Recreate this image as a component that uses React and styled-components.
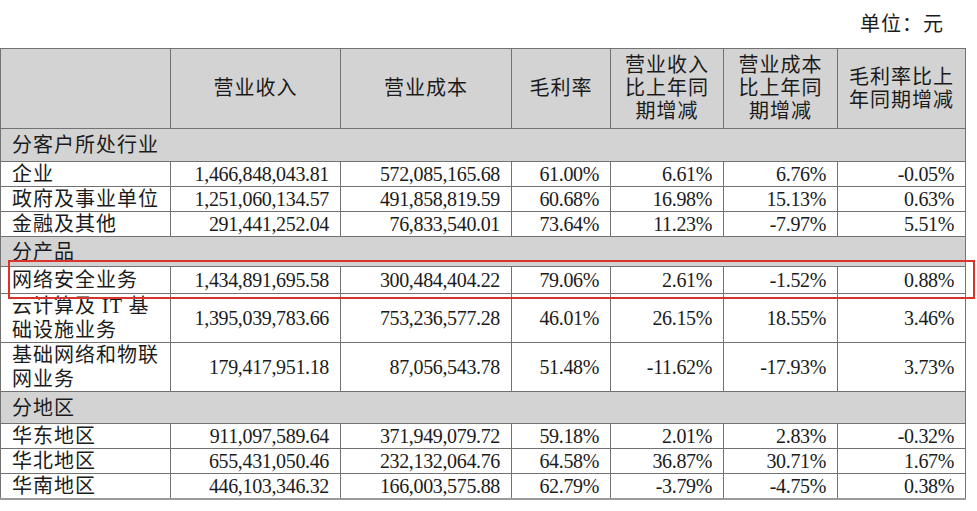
import React from "react";
import styled, { createGlobalStyle } from "styled-components";

const GlobalStyle = createGlobalStyle`
  html, body {
    margin: 0;
    padding: 0;
    background: #ffffff;
  }
  body {
    font-family: "Liberation Serif", "Noto Sans CJK SC", serif;
    color: #1b1b1b;
  }
`;

const Page = styled.div`
  width: 977px;
  height: 511px;
  overflow: hidden;
`;

const UnitLine = styled.div`
  height: 48px;
  box-sizing: border-box;
  padding: 12px 33px 0 0;
  text-align: right;
  font-size: 20px;
  line-height: 24px;
  letter-spacing: 1px;
`;

const TableWrap = styled.div`
  position: relative;
  width: 965px;
`;

const Table = styled.table`
  width: 965px;
  table-layout: fixed;
  border-collapse: collapse;
  font-size: 19px;
`;

const HeadCell = styled.th`
  background: #d3d3d3;
  border: 1px solid #727272;
  font-weight: normal;
  font-size: 20px;
  line-height: 23px;
  letter-spacing: 1px;
  text-align: center;
  vertical-align: middle;
  white-space: nowrap;
  padding: 0;
  height: 79px;
`;

const CategoryCell = styled.td`
  background: #d3d3d3;
  border: 1px solid #727272;
  font-size: 20px;
  letter-spacing: 1px;
  line-height: 24px;
  padding: 0 0 0 11px;
  height: ${(p) => p.$h}px;
`;

const Cell = styled.td`
  border: 1px solid #727272;
  line-height: 24px;
  vertical-align: middle;
  height: ${(p) => p.$h || 23}px;
  padding: ${(p) => (p.$num ? "0 11px 0 0" : "0 0 0 11px")};
  text-align: ${(p) => (p.$num ? "right" : "left")};
  font-size: 20px;
  letter-spacing: ${(p) => (p.$num ? "-0.35px" : "1px")};
  white-space: ${(p) => (p.$num ? "nowrap" : "normal")};
`;

const LastRow = styled.tr`
  td {
    border-bottom: 2px solid #9a9a9a;
  }
`;

const Highlight = styled.div`
  position: absolute;
  left: 8px;
  top: 212px;
  width: 963px;
  height: 35px;
  border: 2px solid #d8342c;
  pointer-events: none;
`;

const widths = [170, 170, 171, 99, 113, 114, 128];

const headers = [
  [],
  ["营业收入"],
  ["营业成本"],
  ["毛利率"],
  ["营业收入", "比上年同", "期增减"],
  ["营业成本", "比上年同", "期增减"],
  ["毛利率比上", "年同期增减"],
];

const sections = [
  {
    title: "分客户所处行业",
    h: 32,
    rows: [
      ["企业", "1,466,848,043.81", "572,085,165.68", "61.00%", "6.61%", "6.76%", "-0.05%"],
      ["政府及事业单位", "1,251,060,134.57", "491,858,819.59", "60.68%", "16.98%", "15.13%", "0.63%"],
      ["金融及其他", "291,441,252.04", "76,833,540.01", "73.64%", "11.23%", "-7.97%", "5.51%", 24],
    ],
  },
  {
    title: "分产品",
    h: 29,
    rows: [
      ["网络安全业务", "1,434,891,695.58", "300,484,404.22", "79.06%", "2.61%", "-1.52%", "0.88%", 26],
      ["云计算及 IT 基础设施业务", "1,395,039,783.66", "753,236,577.28", "46.01%", "26.15%", "18.55%", "3.46%", 47],
      ["基础网络和物联网业务", "179,417,951.18", "87,056,543.78", "51.48%", "-11.62%", "-17.93%", "3.73%", 48],
    ],
  },
  {
    title: "分地区",
    h: 31,
    rows: [
      ["华东地区", "911,097,589.64", "371,949,079.72", "59.18%", "2.01%", "2.83%", "-0.32%", 24],
      ["华北地区", "655,431,050.46", "232,132,064.76", "64.58%", "36.87%", "30.71%", "1.67%"],
      ["华南地区", "446,103,346.32", "166,003,575.88", "62.79%", "-3.79%", "-4.75%", "0.38%", 23],
    ],
  },
];

function DataRow({ row, last }) {
  const cells = row.slice(0, 7);
  const h = row[7];
  const Row = last ? LastRow : "tr";
  return (
    <Row>
      {cells.map((v, i) => (
        <Cell key={i} $num={i > 0} $h={h}>
          {v}
        </Cell>
      ))}
    </Row>
  );
}

export default function App() {
  return (
    <Page>
      <GlobalStyle />
      <UnitLine>单位：元</UnitLine>
      <TableWrap>
        <Table>
          <colgroup>
            {widths.map((w, i) => (
              <col key={i} style={{ width: w }} />
            ))}
          </colgroup>
          <thead>
            <tr>
              {headers.map((lines, i) => (
                <HeadCell key={i}>
                  {lines.map((l, j) => (
                    <React.Fragment key={j}>
                      {j > 0 && <br />}
                      {l}
                    </React.Fragment>
                  ))}
                </HeadCell>
              ))}
            </tr>
          </thead>
          <tbody>
            {sections.map((s, si) => (
              <React.Fragment key={s.title}>
                <tr>
                  <CategoryCell colSpan={7} $h={s.h}>
                    {s.title}
                  </CategoryCell>
                </tr>
                {s.rows.map((r, ri) => (
                  <DataRow
                    key={r[0]}
                    row={r}
                    last={si === sections.length - 1 && ri === s.rows.length - 1}
                  />
                ))}
              </React.Fragment>
            ))}
          </tbody>
        </Table>
        <Highlight />
      </TableWrap>
    </Page>
  );
}
